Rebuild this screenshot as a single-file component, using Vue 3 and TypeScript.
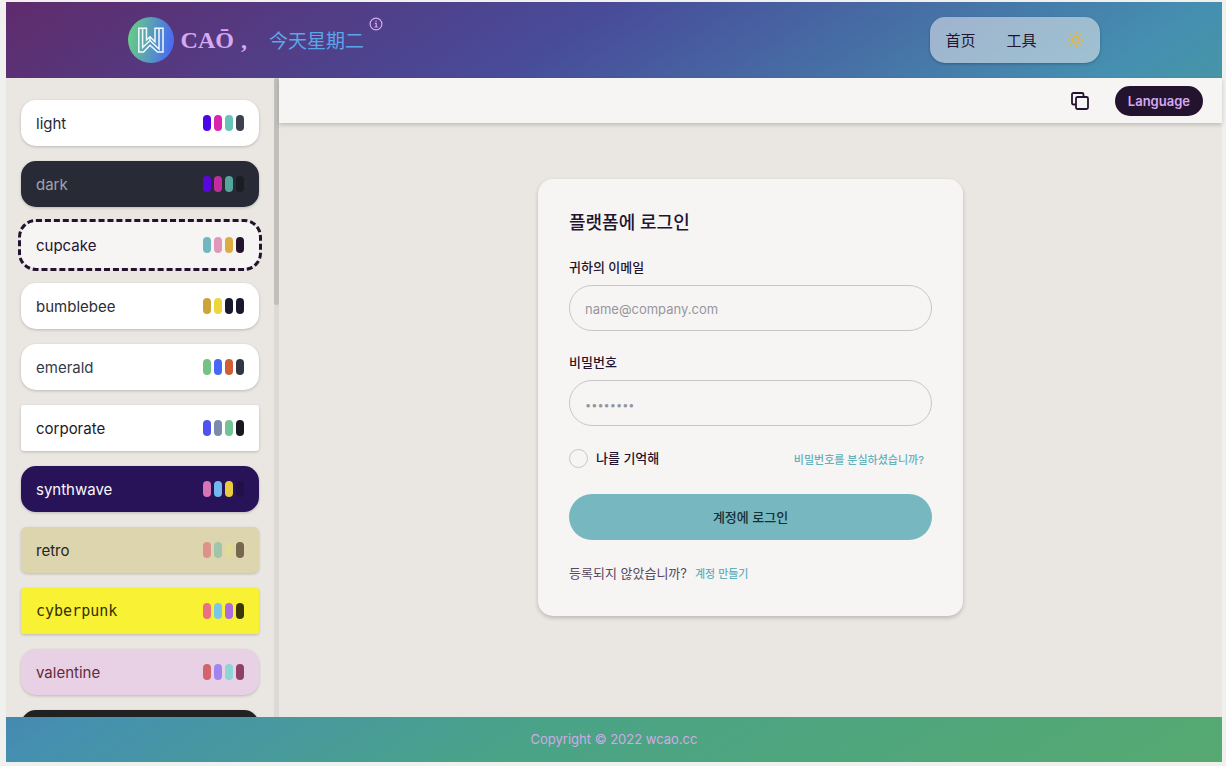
<script setup lang="ts">
import { ref } from 'vue'

interface Theme {
  name: string
  base: string
  text: string
  swatches: string[]
  shape?: 'square' | 'soft'
  mono?: boolean
}

const themes: Theme[] = [
  { name: 'light', base: '#ffffff', text: '#1f2937', swatches: ['#4b06e8', '#d926aa', '#66c5b8', '#3d4050'] },
  { name: 'dark', base: '#282a36', text: '#a0a4b2', swatches: ['#5a06df', '#c22c9d', '#53a69b', '#1b1d24'] },
  { name: 'cupcake', base: '#f7f5f4', text: '#24132f', swatches: ['#70b8c0', '#e198b8', '#dcac43', '#24132f'] },
  { name: 'bumblebee', base: '#ffffff', text: '#2d2d35', swatches: ['#cba43a', '#ecd53f', '#181830', '#181830'] },
  { name: 'emerald', base: '#ffffff', text: '#333c4d', swatches: ['#75c383', '#4668f2', '#cf5d35', '#303642'] },
  { name: 'corporate', base: '#ffffff', text: '#181a2a', swatches: ['#5053ee', '#7b8bac', '#75c294', '#181820'], shape: 'square' },
  { name: 'synthwave', base: '#281358', text: '#f9f7fd', swatches: ['#d873b5', '#70b8ef', '#e9cb40', '#201047'] },
  { name: 'retro', base: '#dcd5ad', text: '#282425', swatches: ['#dd938a', '#9fc5ac', '#e1db99', '#75684e'], shape: 'soft' },
  { name: 'cyberpunk', base: '#f9f133', text: '#333000', swatches: ['#e97181', '#7bc8e5', '#ae6bdc', '#3a3806'], shape: 'square', mono: true },
  { name: 'valentine', base: '#e8d0e5', text: '#632c3b', swatches: ['#d2646d', '#a085f1', '#8dd4d5', '#8e4068'] },
]

const selected = ref('cupcake')
const email = ref('')
const password = ref('')
const remember = ref(false)
</script>

<template>
  <div class="shell">
    <header class="top">
      <div class="brand">
        <svg class="logo" viewBox="0 0 46 46" aria-hidden="true">
          <defs>
            <linearGradient id="logoFill" x1="0" y1="0" x2="1" y2="0.15">
              <stop offset="0" stop-color="#69d47c" />
              <stop offset="1" stop-color="#4a6df0" />
            </linearGradient>
          </defs>
          <circle cx="23" cy="23" r="23" fill="url(#logoFill)" />
          <g fill="none" stroke="#effaff" stroke-width="1.5" stroke-linejoin="miter">
            <path d="M10.800 11.200H18.500V23L22 19.800L27 24.800V11.200H35V35H29.500L22 28.200L15.500 35H10.800Z" />
            <path d="M14.600 11.200V30.500L22 23.500L31 32V11.200M22 19.800V23.500" />
          </g>
        </svg>
        <span class="name">CAŌ</span>
        <span class="comma">,</span>
        <span class="day">今天星期二</span>
        <svg class="info" viewBox="0 0 14 14" fill="none" stroke="#d6a9f0" aria-hidden="true">
          <circle cx="7" cy="7" r="5.900" stroke-width="1.200" />
          <path d="M5.800 6.300H7.200V10M5.500 10H8.800M6.500 4.200H7.600" stroke-width="1.200" />
        </svg>
      </div>
      <nav class="menu">
        <a href="#home">首页</a>
        <a href="#tools">工具</a>
        <button type="button" class="sun" aria-label="Toggle brightness">
          <svg viewBox="0 0 18 18" fill="none" stroke="#e2b843" stroke-width="1.900">
            <circle cx="9" cy="9" r="3.500" />
            <path d="M9 1V3M9 15V17M1 9H3M15 9H17M3.300 3.300L4.700 4.700M13.300 13.300L14.700 14.700M3.300 14.700L4.700 13.300M13.300 4.700L14.700 3.300" />
          </svg>
        </button>
      </nav>
    </header>

    <div class="body">
      <aside class="side">
        <div class="themes">
          <button
            v-for="t in themes"
            :key="t.name"
            type="button"
            class="theme"
            :class="[t.shape, { mono: t.mono, active: selected === t.name }]"
            :style="{ backgroundColor: t.base, color: t.text }"
            @click="selected = t.name"
          >
            <span>{{ t.name }}</span>
            <span class="swatches">
              <i v-for="(c, n) in t.swatches" :key="n" :style="{ backgroundColor: c }"></i>
            </span>
          </button>
          <div class="theme next"></div>
        </div>
        <div class="rail"><div class="thumb"></div></div>
      </aside>

      <main class="main">
        <div class="toolbar">
          <button type="button" class="copy" aria-label="Copy">
            <svg viewBox="0 0 18 18" fill="none" stroke="#24132f" stroke-width="1.800" stroke-linejoin="round">
              <rect x="5" y="5" width="12" height="12" rx="1.500" />
              <path d="M5 12.500H2.500Q1 12.500 1 11V2.500Q1 1 2.500 1H11Q12.500 1 12.500 2.500V5" />
            </svg>
          </button>
          <button type="button" class="language">Language</button>
        </div>

        <div class="stage">
          <form class="card" @submit.prevent>
            <h1>플랫폼에 로그인</h1>
            <label class="caption" for="email">귀하의 이메일</label>
            <input id="email" v-model="email" class="field" type="email" placeholder="name@company.com" />
            <label class="caption" for="password">비밀번호</label>
            <input id="password" v-model="password" class="field dots" type="password" placeholder="••••••••" />
            <div class="options">
              <input id="remember" v-model="remember" type="checkbox" />
              <label for="remember">나를 기억해</label>
              <a class="link" href="#forgot">비밀번호를 분실하셨습니까?</a>
            </div>
            <button type="submit" class="submit">계정에 로그인</button>
            <p class="register">등록되지 않았습니까?<a class="link" href="#register">계정 만들기</a></p>
          </form>
        </div>
      </main>
    </div>

    <footer class="bottom">Copyright © 2022 wcao.cc</footer>
  </div>
</template>

<style>
body {
  margin: 0;
  background: #f0f0ef;
}
</style>

<style scoped>
* {
  box-sizing: border-box;
}

button,
input {
  font: inherit;
  color: inherit;
  margin: 0;
}

button {
  border: 0;
  padding: 0;
  background: none;
  cursor: pointer;
}

a {
  color: inherit;
  text-decoration: none;
}

svg {
  display: block;
}

.shell {
  height: 100vh;
  display: grid;
  grid-template-rows: 76px minmax(0, 1fr) 45px;
  border: solid #f0f0ef;
  border-width: 2px 4px 4px 6px;
  background: linear-gradient(to bottom right, #5f2b6c 0%, #484b99 25%, #4590b1 50%, #4aa387 70%, #56a970 100%) padding-box;
  font-family: Inter, "Noto Sans CJK KR", sans-serif;
  color: #24132f;
}

.top {
  display: flex;
  align-items: center;
  justify-content: space-between;
  padding: 0 10%;
}

.brand {
  display: flex;
  align-items: center;
}

.logo {
  width: 46px;
  height: 46px;
}

.name,
.comma {
  margin-left: 7px;
  font: bold 24px/46px "Liberation Serif", serif;
  color: #d6a9f0;
}

.day {
  margin-left: 22px;
  font: 19px/46px "Noto Sans CJK SC", sans-serif;
  color: #5aa6ea;
}

.info {
  width: 14px;
  height: 14px;
  margin: 0 0 32px 5px;
}

.menu {
  display: flex;
  align-items: center;
  gap: 31px;
  height: 46px;
  padding: 0 15px;
  border-radius: 15px;
  background: rgba(247, 245, 244, 0.5);
  box-shadow: 0 1px 3px rgba(0, 0, 0, 0.25);
  font: 15px/46px "Noto Sans CJK SC", sans-serif;
}

.sun svg,
.copy svg {
  width: 18px;
  height: 18px;
}

.body {
  display: grid;
  grid-template-columns: 273px minmax(0, 1fr);
  background: #eae7e2;
  min-height: 0;
}

.side {
  display: flex;
  min-height: 0;
  overflow: hidden;
}

.themes {
  flex: 1;
  display: flex;
  flex-direction: column;
  gap: 15px;
  padding: 22px 15px 0;
}

.theme {
  flex: none;
  display: flex;
  align-items: center;
  justify-content: space-between;
  height: 46px;
  padding: 0 15px;
  border-radius: 15px;
  box-shadow: 0 1px 3px rgba(0, 0, 0, 0.2);
  font-size: 15px;
}

.theme.square {
  border-radius: 3px;
}

.theme.soft {
  border-radius: 6px;
}

.theme.mono {
  font-family: "DejaVu Sans Mono", monospace;
}

.theme.next {
  background: #212121;
}

.theme.active {
  outline: 3px dashed #24132f;
  box-shadow: none;
}

.swatches {
  display: flex;
  gap: 3px;
}

.swatches i {
  width: 8px;
  height: 16px;
  border-radius: 4px;
}

.rail {
  width: 5px;
  background: #dcd9d6;
}

.thumb {
  height: 35.5%;
  border-radius: 3px;
  background: #c1bfbc;
}

.main {
  display: flex;
  flex-direction: column;
}

.toolbar {
  display: flex;
  align-items: center;
  justify-content: flex-end;
  gap: 26px;
  height: 45px;
  padding: 0 19px;
  background: #f7f5f4;
  box-shadow: 0 2px 4px rgba(0, 0, 0, 0.18);
}

.language {
  height: 30px;
  padding: 0 13px;
  border-radius: 15px;
  background: #24132f;
  color: #d6a9f0;
  font-size: 13px;
  font-weight: 600;
}

.stage {
  flex: 1;
  display: flex;
  justify-content: center;
  align-items: flex-start;
  padding: 56px 20px;
}

.card {
  width: 100%;
  max-width: 425px;
  padding: 31px 31px 30px;
  border-radius: 15px;
  background: #f7f5f4;
  box-shadow: 0 2px 4px rgba(0, 0, 0, 0.2);
  font-size: 13px;
  line-height: 20px;
}

h1 {
  margin: 0 0 21px;
  font-size: 18px;
  line-height: 26px;
  font-weight: 500;
}

.caption {
  display: block;
  margin-bottom: 8px;
  font-weight: 500;
}

.field {
  display: block;
  width: 100%;
  height: 46px;
  margin-bottom: 21px;
  padding: 2px 15px 0;
  border: 1px solid #c8c5c7;
  border-radius: 23px;
  background: transparent;
  outline: none;
}

.field::placeholder {
  color: #96959f;
  opacity: 1;
}

.dots::placeholder {
  font-size: 11px;
}

.options {
  display: flex;
  align-items: center;
  height: 22px;
  font-weight: 500;
}

.options input {
  appearance: none;
  width: 19px;
  height: 19px;
  margin-right: 8px;
  border: 1px solid #c8c5c7;
  border-radius: 50%;
}

.options input:checked {
  background: #24132f;
}

.link {
  font-size: 11px;
  font-weight: 500;
  color: #62b1bd;
}

.options .link {
  margin: 3px 8px 0 auto;
}

.submit {
  display: block;
  width: 100%;
  height: 46px;
  margin: 25px 0 23px;
  border-radius: 23px;
  background: #76b7c0;
  color: #152f36;
  font-weight: 500;
}

.register {
  margin: 0 0 2px;
  color: #56485e;
}

.register .link {
  margin-left: 8px;
}

.bottom {
  display: flex;
  align-items: center;
  justify-content: center;
  padding-bottom: 1px;
  font-size: 13px;
  color: #d0abe8;
}
</style>
